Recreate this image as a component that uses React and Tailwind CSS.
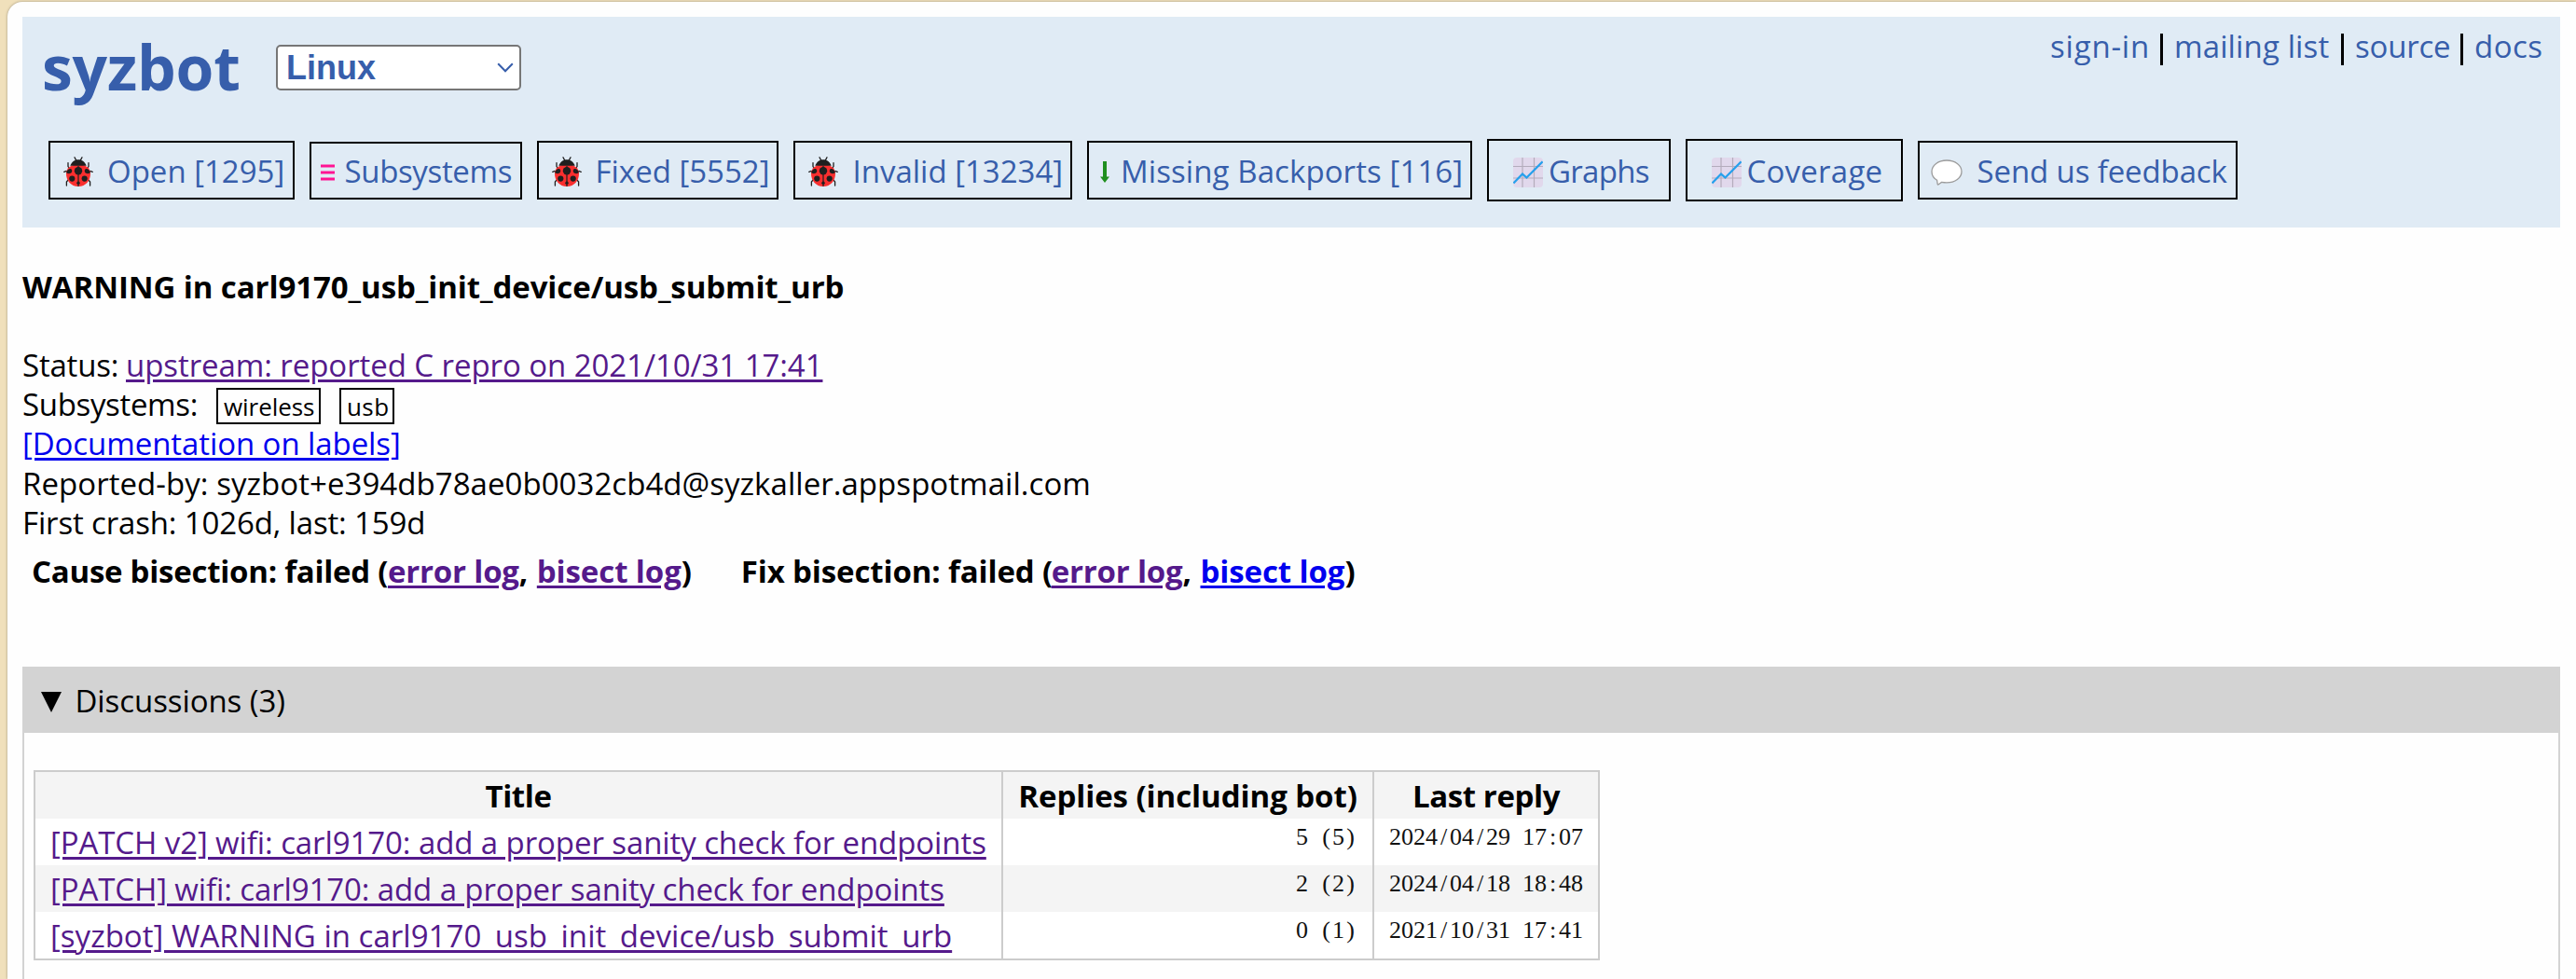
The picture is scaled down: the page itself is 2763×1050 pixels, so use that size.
import React from "react";

function Ladybug({ className }) {
  return (
    <svg viewBox="0 0 32 32" className={className} fill="none">
      <g stroke="#1f1f1f" strokeWidth="1.3" strokeLinecap="round">
        <path d="M13.5 3.6 12 .8M18.5 3.6 20 .8" />
        <path d="M6.8 12.8 5 10.6V6.6M25.2 12.8 27 10.6V6.6" />
        <path d="M4.6 16.6 3 15.4.8 16.4M27.4 16.6 29 15.4l2.2 1" />
        <path d="M5.6 24.4 3.4 27v4M26.4 24.4l2.2 2.6v4" />
      </g>
      <path d="M16 8.4c7.4 0 13 3.1 13 10.1S24 32 16 32 3 25.5 3 18.5 8.6 8.4 16 8.4z" fill="#f92f2f" />
      <path d="M7.3 9.8C8.6 5.8 12 3.2 16 3.2s7.4 2.6 8.7 6.6z" fill="#1f1f1f" />
      <path d="M16 10v22" stroke="#1f1f1f" strokeWidth="1.2" />
      <g fill="#1f1f1f">
        <circle cx="16" cy="15.3" r="4.2" />
        <circle cx="9.3" cy="23.6" r="3.1" />
        <circle cx="22.7" cy="23.6" r="3.1" />
        <path d="M3.400 16.400c1-2.600 2.600-3.800 4.300-3.400 1.500.6 1.900 2.200 1.300 3.600-.8 1.600-3.200 2-5.600 1z" />
        <path d="M28.600 16.400c-1-2.600-2.600-3.800-4.300-3.400-1.500.6-1.900 2.200-1.300 3.600.8 1.600 3.200 2 5.600 1z" />
        <circle cx="16" cy="28.3" r="1.7" />
      </g>
    </svg>
  );
}

function ChartIcon({ className }) {
  return (
    <svg viewBox="0 0 32 32" className={className} fill="none">
      <rect width="32" height="32" rx="4" fill="#e1d8ec" />
      <path d="M10 0v32M22.5 0v32M0 9.5h32M0 22h32" stroke="#b4acbc" strokeWidth="1.2" />
      <path d="M.4 27.4 10 17.6l4.500 4L31.600 4.400" stroke="#26a0ec" strokeWidth="2.200" />
    </svg>
  );
}

function Bubble({ className }) {
  return (
    <svg viewBox="0 0 34 28" className={className}>
      <path
        d="M17 1C8 1 1 6.200 1 13c0 4.400 2.400 7.400 5.600 9.200l.6 4.200c.1.700.6.800 1.100.4l3.200-2.400c1.800.3 3.600.5 5.500.5 9 0 16-5.200 16-12S26 1 17 1z"
        fill="#fff"
        stroke="#9b9b9b"
        strokeWidth="1.3"
      />
    </svg>
  );
}

function Mono({ text }) {
  return (
    <span className="inline-flex font-['Liberation_Serif',serif] text-[26px] leading-[34px] text-[#111]">
      {text.split("").map((c, i) => (
        <span key={i} className="w-[13px] whitespace-pre text-center">{c}</span>
      ))}
    </span>
  );
}

const box = "flex shrink-0 items-start whitespace-nowrap border-2 border-black";
const visited = "text-[#551a8b] underline decoration-[3px] underline-offset-[3px]";
const fresh = "text-[#0000ee] underline decoration-[3px] underline-offset-[3px]";

const rows = [
  { title: "[PATCH v2] wifi: carl9170: add a proper sanity check for endpoints", track: "tracking-[-0.09px]", replies: "5 (5)", last: "2024/04/29 17:07", bg: "bg-white" },
  { title: "[PATCH] wifi: carl9170: add a proper sanity check for endpoints", track: "tracking-[-0.11px]", replies: "2 (2)", last: "2024/04/18 18:48", bg: "bg-[#f4f4f4]" },
  { title: "[syzbot] WARNING in carl9170_usb_init_device/usb_submit_urb", track: "tracking-[0.03px]", replies: "0 (1)", last: "2021/10/31 17:41", bg: "bg-white" },
];

function Header() {
  return (
    <header className="h-[226px] bg-[#e0ebf5] text-[#375eab]">
      <div className="flex h-[131px] items-start">
        <h1 className="ml-[21px] mt-[9px] w-[251px] text-[66px] font-bold leading-[88px] tracking-[-0.2px]">syzbot</h1>
        <div className="mt-[30px] flex h-[49px] w-[263px] items-center justify-between rounded-[5px] border-2 border-[#767676] bg-white pl-[9px] pr-[6px] text-[36px] font-bold leading-[45px] [font-family:'Liberation_Sans',Arial,sans-serif]">
          <span>Linux</span>
          <svg viewBox="0 0 18 11" className="h-[11px] w-[18px]" fill="none">
            <path d="M1.2 1.2 9 9.2l7.800-8" stroke="#375eab" strokeWidth="2" />
          </svg>
        </div>
        <nav className="ml-auto mr-[19px] mt-[11px] flex leading-[42px] text-black">
          <a className="w-[119px] tracking-[0.8px] text-[#375eab]">sign-in</a>
          <span className="-ml-[1px] mr-[12px] mt-[7px] h-[34px] w-[3px] bg-black" />
          <a className="w-[179px] tracking-[0.13px] text-[#375eab]">mailing list</a>
          <span className="mr-[12px] mt-[7px] h-[34px] w-[3px] bg-black" />
          <a className="w-[113px] tracking-[-0.2px] text-[#375eab]">source</a>
          <span className="mr-[12px] mt-[7px] h-[34px] w-[3px] bg-black" />
          <a className="w-[73px] tracking-[0.45px] text-[#375eab]">docs</a>
        </nav>
      </div>
      <div className="ml-[28px] flex items-start gap-[16px] leading-[42px]">
        <a className={`${box} mt-[2px] h-[63px] w-[264px] pl-[14px] pt-[10px]`}>
          <Ladybug className="mr-[15px] mt-[5px] size-[32px]" />
          <span>Open [1295]</span>
        </a>
        <a className={`${box} mt-[3px] h-[62px] w-[228px] pl-[10px] pt-[9px]`}>
          <svg viewBox="0 0 15 18" className="mr-[10.5px] mt-[12.5px] h-[18px] w-[15px]">
            <path d="M0 2h15M0 9h15M0 16h15" stroke="#ff1493" strokeWidth="3" />
          </svg>
          <span className="tracking-[-0.35px]">Subsystems</span>
        </a>
        <a className={`${box} mt-[2px] h-[63px] w-[259px] pl-[14px] pt-[10px]`}>
          <Ladybug className="mr-[14.5px] mt-[5px] size-[32px]" />
          <span>Fixed [5552]</span>
        </a>
        <a className={`${box} mt-[2px] h-[63px] w-[299px] pl-[14px] pt-[10px]`}>
          <Ladybug className="mr-[15.5px] mt-[5px] size-[32px]" />
          <span>Invalid [13234]</span>
        </a>
        <a className={`${box} mt-[2px] h-[63px] w-[413px] pl-[12px] pt-[10px]`}>
          <svg viewBox="0 0 10 23" className="mr-[12px] mt-[10px] h-[23px] w-[10px]">
            <path d="M3 0h4v16.5h3L5 23 0 16.500h3z" fill="#1f8f1f" />
          </svg>
          <span className="tracking-[0.09px]">Missing Backports [116]</span>
        </a>
        <a className={`${box} h-[67px] w-[197px] pl-[26px] pt-[12px]`}>
          <ChartIcon className="mr-[6px] mt-[6px] size-[32px]" />
          <span className="tracking-[-0.7px]">Graphs</span>
        </a>
        <a className={`${box} h-[67px] w-[233px] pl-[26px] pt-[12px]`}>
          <ChartIcon className="mr-[5.5px] mt-[6px] size-[32px]" />
          <span className="tracking-[0.24px]">Coverage</span>
        </a>
        <a className={`${box} mt-[2px] h-[63px] w-[343px] pl-[12px] pt-[10px]`}>
          <Bubble className="mr-[15.5px] mt-[8px] h-[28px] w-[34px]" />
          <span className="tracking-[-0.12px]">Send us feedback</span>
        </a>
      </div>
    </header>
  );
}

export default function App() {
  return (
    <div className="h-[1050px] overflow-hidden bg-[#f0e0bb] pl-[8px] pt-[2px] font-['Open_Sans',sans-serif] text-[33px] text-black">
      <main className="flex h-[1048px] flex-col rounded-tl-[16px] bg-[#fefefe] pl-[16px] pr-[17px] pt-[16px] shadow-[0_0_3px_rgba(0,0,0,0.35)]">
        <Header />
        <section className="whitespace-nowrap leading-[42.3px]">
          <h2 className="mt-[43px] font-bold tracking-[-0.09px]">WARNING in carl9170_usb_init_device/usb_submit_urb</h2>
          <div className="mt-[41.5px] flex">
            <span className="w-[111px] tracking-[-0.2px]">Status:</span>
            <a className={`${visited} tracking-[-0.07px]`}>upstream: reported C repro on 2021/10/31 17:41</a>
          </div>
          <div className="flex h-[42.3px]">
            <span className="w-[208px] tracking-[-0.34px]">Subsystems:</span>
            <span className="mt-[3px] h-[39px] w-[112px] border-2 border-black pl-[6px] text-[26px] leading-[37px] tracking-[-0.07px]">wireless</span>
            <span className="ml-[20px] mt-[3px] h-[39px] w-[59px] border-2 border-black pl-[6px] text-[26px] leading-[37px] tracking-[0.4px]">usb</span>
          </div>
          <div><a className={`${fresh} tracking-[-0.08px]`}>[Documentation on labels]</a></div>
          <div className="tracking-[0.05px]">Reported-by: syzbot+e394db78ae0b0032cb4d@syzkaller.appspotmail.com</div>
          <div className="tracking-[-0.15px]">First crash: 1026d, last: 159d</div>
          <div className="mt-[10px] flex pl-[10px] font-bold">
            <span className="w-[382px] tracking-[-0.25px]">Cause bisection: failed (</span>
            <a className={`${visited} tracking-[-0.2px]`}>error log</a>
            <span className="w-[19px]">,</span>
            <a className={`${visited} tracking-[-0.1px]`}>bisect log</a>
            <span className="w-[64px]">)</span>
            <span className="w-[333px] tracking-[-0.12px]">Fix bisection: failed (</span>
            <a className={`${visited} tracking-[-0.2px]`}>error log</a>
            <span className="w-[19px]">,</span>
            <a className={`${fresh} tracking-[-0.1px]`}>bisect log</a>
            <span>)</span>
          </div>
        </section>
        <section className="mt-[80px] flex grow flex-col">
          <div className="flex h-[71px] items-start bg-[#d3d3d3] pl-[20px] pt-[16px] leading-[42px]">
            <svg viewBox="0 0 22 22" className="mr-[14.5px] mt-[11px] size-[22px]">
              <path d="M0 0h22L11 22z" fill="#000" />
            </svg>
            <span className="tracking-[-0.08px]">Discussions (3)</span>
          </div>
          <div className="grow border-x-2 border-[#d3d3d3] pl-[10px] pt-[40px]">
            <div className="w-[1680px] whitespace-nowrap border-2 border-[#ccc] leading-[42px]">
              <div className="grid h-[50px] grid-cols-[1036px_398px_1fr] bg-[#f4f4f4] text-center font-bold">
                <span className="pt-[5px] tracking-[-0.42px]">Title</span>
                <span className="border-l-2 border-[#ccc] pt-[5px] tracking-[-0.07px]">Replies (including bot)</span>
                <span className="border-l-2 border-[#ccc] pt-[5px] tracking-[-0.4px]">Last reply</span>
              </div>
              {rows.map((r) => (
                <div key={r.title} className={`grid h-[50px] grid-cols-[1036px_398px_1fr] ${r.bg}`}>
                  <div className="pl-[16px] pt-[5px]"><a className={`${visited} ${r.track}`}>{r.title}</a></div>
                  <div className="flex items-start justify-end border-l-2 border-[#ccc] pr-[17px] pt-[3px]"><Mono text={r.replies} /></div>
                  <div className="flex items-start border-l-2 border-[#ccc] pl-[16px] pt-[3px]"><Mono text={r.last} /></div>
                </div>
              ))}
            </div>
          </div>
        </section>
      </main>
    </div>
  );
}
